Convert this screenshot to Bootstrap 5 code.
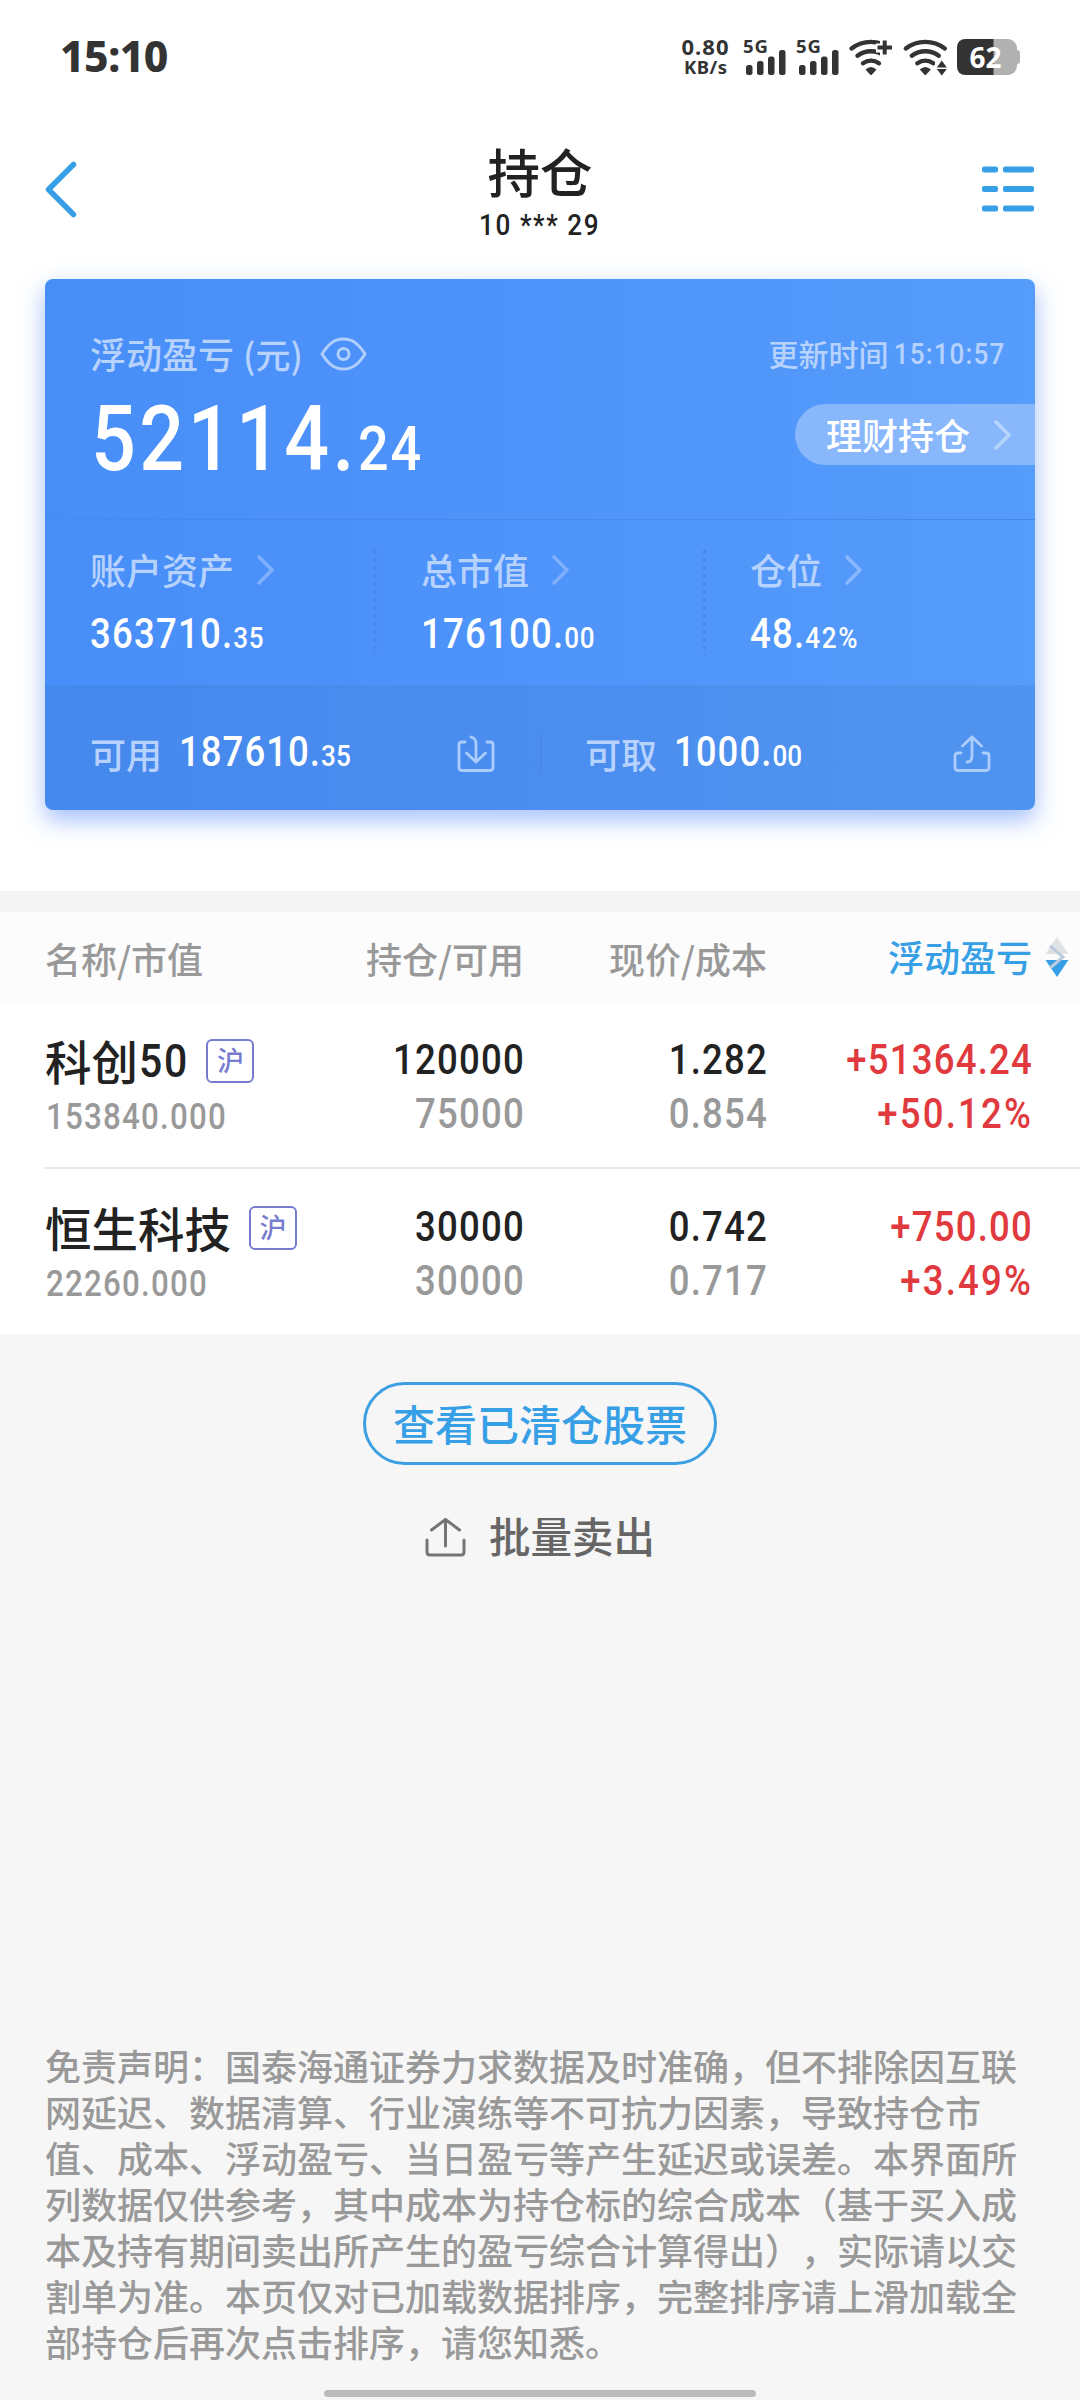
<!DOCTYPE html>
<html lang="zh-CN">
<head>
<meta charset="utf-8">
<meta name="viewport" content="width=device-width, initial-scale=1">
<title>持仓</title>
<link href="https://cdn.jsdelivr.net/npm/bootstrap@5.3.0/dist/css/bootstrap.min.css" rel="stylesheet">
<style>
  body { background:#f6f6f6; color:#222; font-family:Roboto,"Noto Sans CJK SC",sans-serif; font-weight:500; font-size:36px; line-height:1; height:2400px; overflow:hidden; }
  svg { display:block; flex:none; }
  .cjk { font-family:"Noto Sans CJK SC",sans-serif; display:block; white-space:nowrap; position:relative; top:-.02em; }
  /* narrow DIN-like figures */
  .fig { display:block; white-space:nowrap; transform:scaleX(.87); transform-origin:0 50%; letter-spacing:1.4px; font-size:42px; line-height:54px; }
  .fig-end { transform-origin:100% 50%; text-align:right; margin-right:-1px; }
  .fig-pct { letter-spacing:2.5px; }
  .fig i { font-style:normal; font-size:30px; letter-spacing:.6px; }
  .statusbar { height:112px; padding:0 58px 0 60px; color:#333; font-family:"Noto Sans",sans-serif; font-weight:700; }
  .clock { font-size:42.5px; line-height:112px; font-weight:800; letter-spacing:-.5px; }
  .titlebar { height:167px; padding:0 45px; }
  .page-name { font-size:52.5px; line-height:60px; top:-.05em; }
  .acct { font-size:30px; line-height:36px; transform-origin:50% 50%; letter-spacing:1.8px; margin-top:4px; }
  .summary-wrap { height:612px; padding:0 45px; }
  .summary { height:531px; border-radius:8px; overflow:hidden; color:#fff; background:linear-gradient(90deg,#488ef8,#4e93fa 45%,#559cfb); }
  .summary-shadow { border-radius:8px; box-shadow:0 10px 24px rgba(72,128,245,.5); height:531px; }
  .soft { color:#b6d2fd; }
  .profit { height:241px; border-bottom:1px solid #468aed; padding-left:45px; }
  .profit-head { height:36px; margin-top:57px; padding-right:29px; }
  .profit-body { height:110px; }
  .big { font-size:90.7px; line-height:100px; letter-spacing:4px; margin-left:1px; }
  .big i { font-size:62px; letter-spacing:2px; }
  .time { font-size:30px; line-height:36px; letter-spacing:1.3px; transform-origin:100% 50%; }
  .wealth { width:240px; height:61px; background:#88b7fc; border-radius:31px 0 0 31px; padding:0 24px 0 31px; }
  .stats { height:165px; padding-top:30px; }
  .stat { padding-left:45px; height:105px; }
  .stat + .stat { padding-left:47px; background:repeating-linear-gradient(180deg,#4687e8 0 3px,transparent 3px 8px) 0 0/3px 100% no-repeat; margin-left:-1px; }
  .stat-head { height:40px; gap:23px; }
  .stat .fig { margin-top:17px; }
  .funds { height:125px; background:rgba(60,110,185,.17); padding-top:12px; }
  .fund { width:495px; padding:0 45px 0 45px; }
  .fund + .fund { padding-right:44px; background:linear-gradient(#4484e0,#4484e0) 0 50%/1px 42px no-repeat; }
  .fund .fig { margin-left:17px; letter-spacing:1.2px; }
  .fund .fig i { letter-spacing:0; }
  .band { height:21px; background:#f5f5f5; }
  .hold-head { height:90px; background:#fcfcfc; color:#999; padding-left:45px; }
  .hold-head .cjk { top:1px; }
  .hold-head .sky .cjk { top:-1px; }
  .c1 { width:225px; } .c2 { width:254px; } .c3 { width:243px; } .c4 { width:265px; }
  .hold { height:165px; margin-left:45px; }
  .hold + .hold { border-top:2px solid #e7e7e7; height:167px; }
  .hold .figs { padding-top:31px; }
  .stock { font-size:46.5px; line-height:56px; }
  .stock .cjk { line-height:56px; }
  .fig-50 { font-size:47px; line-height:56px; letter-spacing:2px; margin-left:1px; margin-right:-8px; }
  .mkt { width:48px; height:44px; border:2px solid #777cd0; border-radius:6px; color:#777cd0; font-size:27px; margin-left:18px; }
  .value { font-size:36px; line-height:44px; letter-spacing:1.4px; color:#999; margin:6px 0 0 1px; }
  .up { color:#e0393e; }
  .dim { color:#999; }
  .sky { color:#369fe6; }
  .cleared { width:354px; height:83px; border:3px solid #3c9fe2; border-radius:42px; color:#369fe6; font-size:42px; margin-top:48px; }
  .batch { font-size:41.5px; color:#666; margin-top:51px; gap:23px; height:42px; }
  .legal { font-size:36px; line-height:46px; color:#999; margin:484px 0 0 45px; top:0; text-spacing-trim:space-all; font-kerning:none; font-feature-settings:"chws" 0,"kern" 0; }
  .homebar { width:432px; height:7px; border-radius:4px; background:#bbb; margin:26px auto 0; }
</style>
</head>
<body>
<main class="d-flex flex-column">
  <div class="bg-white">
    <header class="statusbar d-flex justify-content-between">
      <div class="clock">15:10</div>
      <svg width="342" height="112" viewBox="680 0 342 112" fill="#333" font-family="Noto Sans, sans-serif" font-weight="700">
        <text x="705" y="55" font-size="22" text-anchor="middle" textLength="47">0.80</text>
        <text x="705.5" y="74" font-size="18.5" text-anchor="middle" textLength="43">KB/s</text>
        <g id="sig">
          <text x="743" y="53" font-size="18.5" textLength="25">5G</text>
          <rect x="746" y="65" width="6.5" height="10" rx="2.5"/><rect x="757" y="61" width="6.5" height="14" rx="2.5"/><rect x="768" y="56.5" width="6.5" height="18.5" rx="2.5"/><rect x="779" y="50" width="6.5" height="25" rx="2.5"/>
        </g>
        <use href="#sig" x="53"/>
        <g id="wf">
          <path d="M851.5 48.5A32 32 0 0 1 890.5 48.5M857.5 55.7A22.5 22.5 0 0 1 884.5 55.7M863 63.3A14 14 0 0 1 879 63.3" fill="none" stroke="#333" stroke-width="4.4" stroke-linecap="round"/>
          <path d="M865.5 69.500q5.500-5 11 0l-4.500 5q-1 1-2 0z"/>
        </g>
        <path d="M876 48h18M884.5 38v20" stroke="#fff" stroke-width="9"/><path d="M877.5 47.5h14.5M884.7 40.5v14" stroke="#333" stroke-width="4"/>
        <use href="#wf" x="54.3"/>
        <path d="M935 61h14v16h-14z" fill="#fff"/>
        <path d="M941.8 60.500l5 7h-10zM941.8 75.500l5-6.500h-10z"/>
        <path d="M1010 50h7q3 0 3 3v8q0 3-3 3h-7z" fill="#b1b1b1"/>
        <rect x="957" y="39" width="60" height="36" rx="9" fill="#b1b1b1"/>
        <path d="M966 39h27.500v36H966q-9 0-9-9V48q0-9 9-9z"/>
        <text x="985.5" y="67.5" font-size="28" text-anchor="middle" fill="#fff" textLength="32">62</text>
      </svg>
    </header>

    <nav class="titlebar d-flex justify-content-between">
      <svg width="60" height="110" viewBox="45 112 60 110"><path d="M73.5 164.5L48.5 189.5L73.5 214.5" fill="none" stroke="#369fe6" stroke-width="5.5" stroke-linecap="round" stroke-linejoin="round"/></svg>
      <div class="d-flex flex-column align-items-center" style="padding-top:31px">
        <div class="page-name cjk">持仓</div>
        <div class="fig acct">10 *** 29</div>
      </div>
      <svg width="60" height="110" viewBox="975 112 60 110" fill="#369fe6"><g id="ln"><rect x="982" y="166.500" width="16" height="6" rx="2"/><rect x="1003" y="166.500" width="31" height="6" rx="2"/></g><use href="#ln" y="19.5"/><use href="#ln" y="39"/></svg>
    </nav>

    <section class="summary-wrap">
      <div class="summary-shadow"><div class="summary">
        <div class="profit">
          <div class="d-flex flex-column">
            <div class="profit-head d-flex align-items-center justify-content-between soft">
              <div class="d-flex align-items-center">
                <span class="cjk">浮动盈亏</span><span class="cjk" style="margin-left:9px;font-size:35px">(元)</span>
                <svg class="ms-3" width="48" height="36" viewBox="0 0 48 36" fill="none" stroke="#b1cffc" stroke-width="3"><path d="M3 18C10 7 16 3 24.500 3S39 7 46 18C39 29 33 33 24.500 33S10 29 3 18z" stroke-linejoin="round"/><ellipse cx="24.5" cy="18" rx="5.5" ry="5.5"/></svg>
              </div>
              <div class="d-flex align-items-center"><span class="cjk" style="font-size:30px">更新时间</span><span class="fig time" style="margin-left:-11px">15:10:57</span></div>
            </div>
            <div class="profit-body d-flex justify-content-between">
              <div class="fig big" style="margin-top:17px">52114.<i>24</i></div>
              <a class="wealth d-flex align-items-center justify-content-between text-white text-decoration-none" href="#" style="margin-top:32px">
                <span class="cjk">理财持仓</span>
                <svg width="17" height="30" viewBox="0 0 17 30"><path d="M2 2L15 15L2 28" fill="none" stroke="#b7d4fd" stroke-width="3.5" stroke-linecap="round" stroke-linejoin="round"/></svg>
              </a>
            </div>
          </div>
        </div>
        <div class="stats row g-0">
          <div class="stat col-4"><div class="stat-head d-flex align-items-center soft"><span class="cjk">账户资产</span><svg width="17" height="30" viewBox="0 0 17 30"><path d="M2 2L15 15L2 28" fill="none" stroke="#80b0fb" stroke-width="3.5" stroke-linecap="round" stroke-linejoin="round"/></svg></div><div class="fig">363710.<i>35</i></div></div>
          <div class="stat col-4"><div class="stat-head d-flex align-items-center soft"><span class="cjk">总市值</span><svg width="17" height="30" viewBox="0 0 17 30"><path d="M2 2L15 15L2 28" fill="none" stroke="#80b0fb" stroke-width="3.5" stroke-linecap="round" stroke-linejoin="round"/></svg></div><div class="fig">176100.<i>00</i></div></div>
          <div class="stat col-4"><div class="stat-head d-flex align-items-center soft"><span class="cjk">仓位</span><svg width="17" height="30" viewBox="0 0 17 30"><path d="M2 2L15 15L2 28" fill="none" stroke="#8ab8fc" stroke-width="3.5" stroke-linecap="round" stroke-linejoin="round"/></svg></div><div class="fig">48.<i style="letter-spacing:1.8px">42%</i></div></div>
        </div>
        <div class="funds d-flex">
          <div class="fund d-flex align-items-center">
            <span class="cjk soft">可用</span><span class="fig">187610.<i>35</i></span>
            <svg class="ms-auto" width="38" height="38" viewBox="0 0 38 38" fill="none" stroke="#acccfc" stroke-width="2.8" stroke-linecap="round" stroke-linejoin="round"><path d="M8 7H4.500Q2 7 2 9.500V32.500Q2 35.500 5 35.500H33Q36 35.500 36 32.500V9.500Q36 7 33.500 7H30M14 2Q19 3 19 9V27M9.500 18L19 27L28.500 18"/></svg>
          </div>
          <div class="fund d-flex align-items-center">
            <span class="cjk soft">可取</span><span class="fig">1000.<i>00</i></span>
            <svg class="ms-auto" width="38" height="38" viewBox="0 0 38 38" fill="none" stroke="#acccfc" stroke-width="2.8" stroke-linecap="round" stroke-linejoin="round"><path d="M8 18H5Q2 18 2 21V32.500Q2 35.500 5 35.500H33Q36 35.500 36 32.500V21Q36 18 33 18H30M14 27Q19 27 19 21V2M9.500 11L19 2L28.500 11"/></svg>
          </div>
        </div>
      </div></div>
    </section>

    <div class="band"></div>

    <section>
      <div class="hold-head d-flex align-items-center">
        <div class="c1"><span class="cjk">名称/市值</span></div>
        <div class="c2 d-flex justify-content-end"><span class="cjk">持仓/可用</span></div>
        <div class="c3 d-flex justify-content-end"><span class="cjk">现价/成本</span></div>
        <div class="c4 d-flex justify-content-end sky"><span class="cjk">浮动盈亏</span></div>
        <svg style="margin-left:13px" width="24" height="42" viewBox="0 0 24 42"><path d="M12 1L23.500 18H.5z" fill="#dfe3e6"/><path d="M.5 24H23.500L12 41z" fill="#369fe6"/><path d="M5 10L18 21L5 32" fill="none" stroke="#bccbdc" stroke-width="3"/></svg>
      </div>

      <div class="hold d-flex">
        <div class="c1" style="padding-top:31px">
          <div class="stock d-flex align-items-center"><span class="cjk">科创</span><span class="fig fig-50">50</span><span class="mkt d-flex align-items-center justify-content-center"><span class="cjk">沪</span></span></div>
          <div class="fig value">153840.000</div>
        </div>
        <div class="c2 figs"><div class="fig fig-end">120000</div><div class="fig fig-end dim">75000</div></div>
        <div class="c3 figs"><div class="fig fig-end">1.282</div><div class="fig fig-end dim">0.854</div></div>
        <div class="c4 figs up"><div class="fig fig-end">+51364.24</div><div class="fig fig-end fig-pct">+50.12%</div></div>
      </div>
      <div class="hold d-flex">
        <div class="c1" style="padding-top:31px">
          <div class="stock d-flex align-items-center"><span class="cjk">恒生科技</span><span class="mkt d-flex align-items-center justify-content-center flex-shrink-0"><span class="cjk">沪</span></span></div>
          <div class="fig value">22260.000</div>
        </div>
        <div class="c2 figs"><div class="fig fig-end">30000</div><div class="fig fig-end dim">30000</div></div>
        <div class="c3 figs"><div class="fig fig-end">0.742</div><div class="fig fig-end dim">0.717</div></div>
        <div class="c4 figs up"><div class="fig fig-end">+750.00</div><div class="fig fig-end fig-pct">+3.49%</div></div>
      </div>
    </section>
  </div>

  <a href="#" class="cleared mx-auto d-flex align-items-center justify-content-center text-decoration-none"><span class="cjk">查看已清仓股票</span></a>
  <div class="batch d-flex align-items-center justify-content-center">
    <svg width="41" height="40" viewBox="0 0 41 40" fill="none" stroke="#757575" stroke-width="3" stroke-linecap="round" stroke-linejoin="round"><path d="M2 23V35Q2 38 5 38H36Q39 38 39 35V23M20.500 29V2.500M6.500 13L20.500 2.500L34.500 13"/></svg>
    <span class="cjk">批量卖出</span>
  </div>

  <p class="cjk legal">免责声明：国泰海通证券力求数据及时准确，但不排除因互联<br>网延迟、数据清算、行业演练等不可抗力因素，导致持仓市<br>值、成本、浮动盈亏、当日盈亏等产生延迟或误差。本界面所<br>列数据仅供参考，其中成本为持仓标的综合成本（基于买入成<br>本及持有期间卖出所产生的盈亏综合计算得出），实际请以交<br>割单为准。本页仅对已加载数据排序，完整排序请上滑加载全<br>部持仓后再次点击排序，请您知悉。</p>
  <div class="homebar"></div>
</main>
<script src="https://cdn.jsdelivr.net/npm/bootstrap@5.3.0/dist/js/bootstrap.bundle.min.js"></script>
</body>
</html>
